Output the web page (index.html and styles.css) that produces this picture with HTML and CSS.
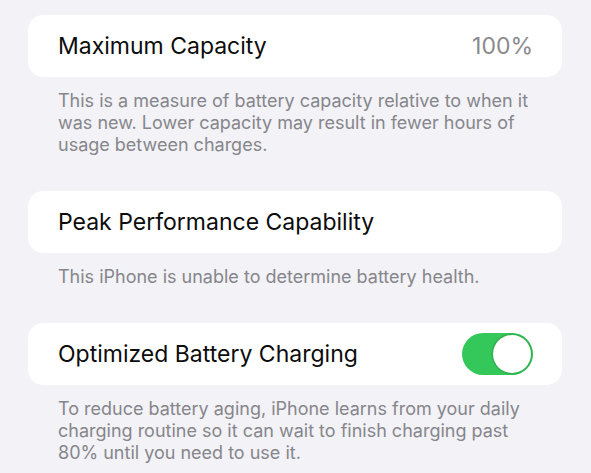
FILE: index.html
```html
<!DOCTYPE html>
<html lang="en">

<head>
    <meta charset="UTF-8">
    <meta name="viewport" content="width=device-width, initial-scale=1.0">
    <title>Battery Health</title>
    <link rel="stylesheet" href="styles.css">
</head>

<body>
    <div class="settings">
        <section class="group">
            <div class="cell">
                <span class="label">Maximum Capacity</span>
                <span class="value">100%</span>
            </div>
            <p class="footer">This is a measure of battery capacity relative to when it was new. Lower capacity may result in fewer hours of usage between charges.</p>
        </section>

        <section class="group">
            <div class="cell">
                <span class="label">Peak Performance Capability</span>
            </div>
            <p class="footer">This iPhone is unable to determine battery health.</p>
        </section>

        <section class="group">
            <div class="cell">
                <span class="label">Optimized Battery Charging</span>
                <span class="switch on"><span class="knob"></span></span>
            </div>
            <p class="footer">To reduce battery aging, iPhone learns from your daily charging routine so it can wait to finish charging past 80% until you need to use it.</p>
        </section>
    </div>
</body>

</html>
```

FILE: styles.css
```css
body {
    margin: 0;
    padding: 0;
    background-color: #f2f2f7;
    font-family: Inter, "Noto Sans", sans-serif;
}

.settings {
    width: 534px;
    padding: 15px 0 0 28px;
}

.group {
    margin-bottom: 35px;
}

.group:last-child {
    margin-bottom: 0;
}

.cell {
    height: 62px;
    background: white;
    border-radius: 15px;
    padding: 0 29px 0 30px;
    display: flex;
    align-items: center;
    justify-content: space-between;
}

.label {
    font-size: 23px;
    color: #0c0c0c;
}

.value {
    font-size: 23px;
    color: #8a8a8e;
}

.footer {
    margin: 0;
    padding: 13px 24px 0 30px;
    font-size: 18px;
    line-height: 22px;
    color: #86868b;
}

.switch {
    width: 71px;
    height: 42px;
    border-radius: 21px;
    background-color: #34c759;
    display: flex;
    align-items: center;
    justify-content: flex-end;
    padding: 0 2px;
    box-sizing: border-box;
}

.knob {
    width: 38px;
    height: 38px;
    border-radius: 50%;
    background: white;
    box-shadow: 0 0 0 1.5px #2fb04f;
}
```
